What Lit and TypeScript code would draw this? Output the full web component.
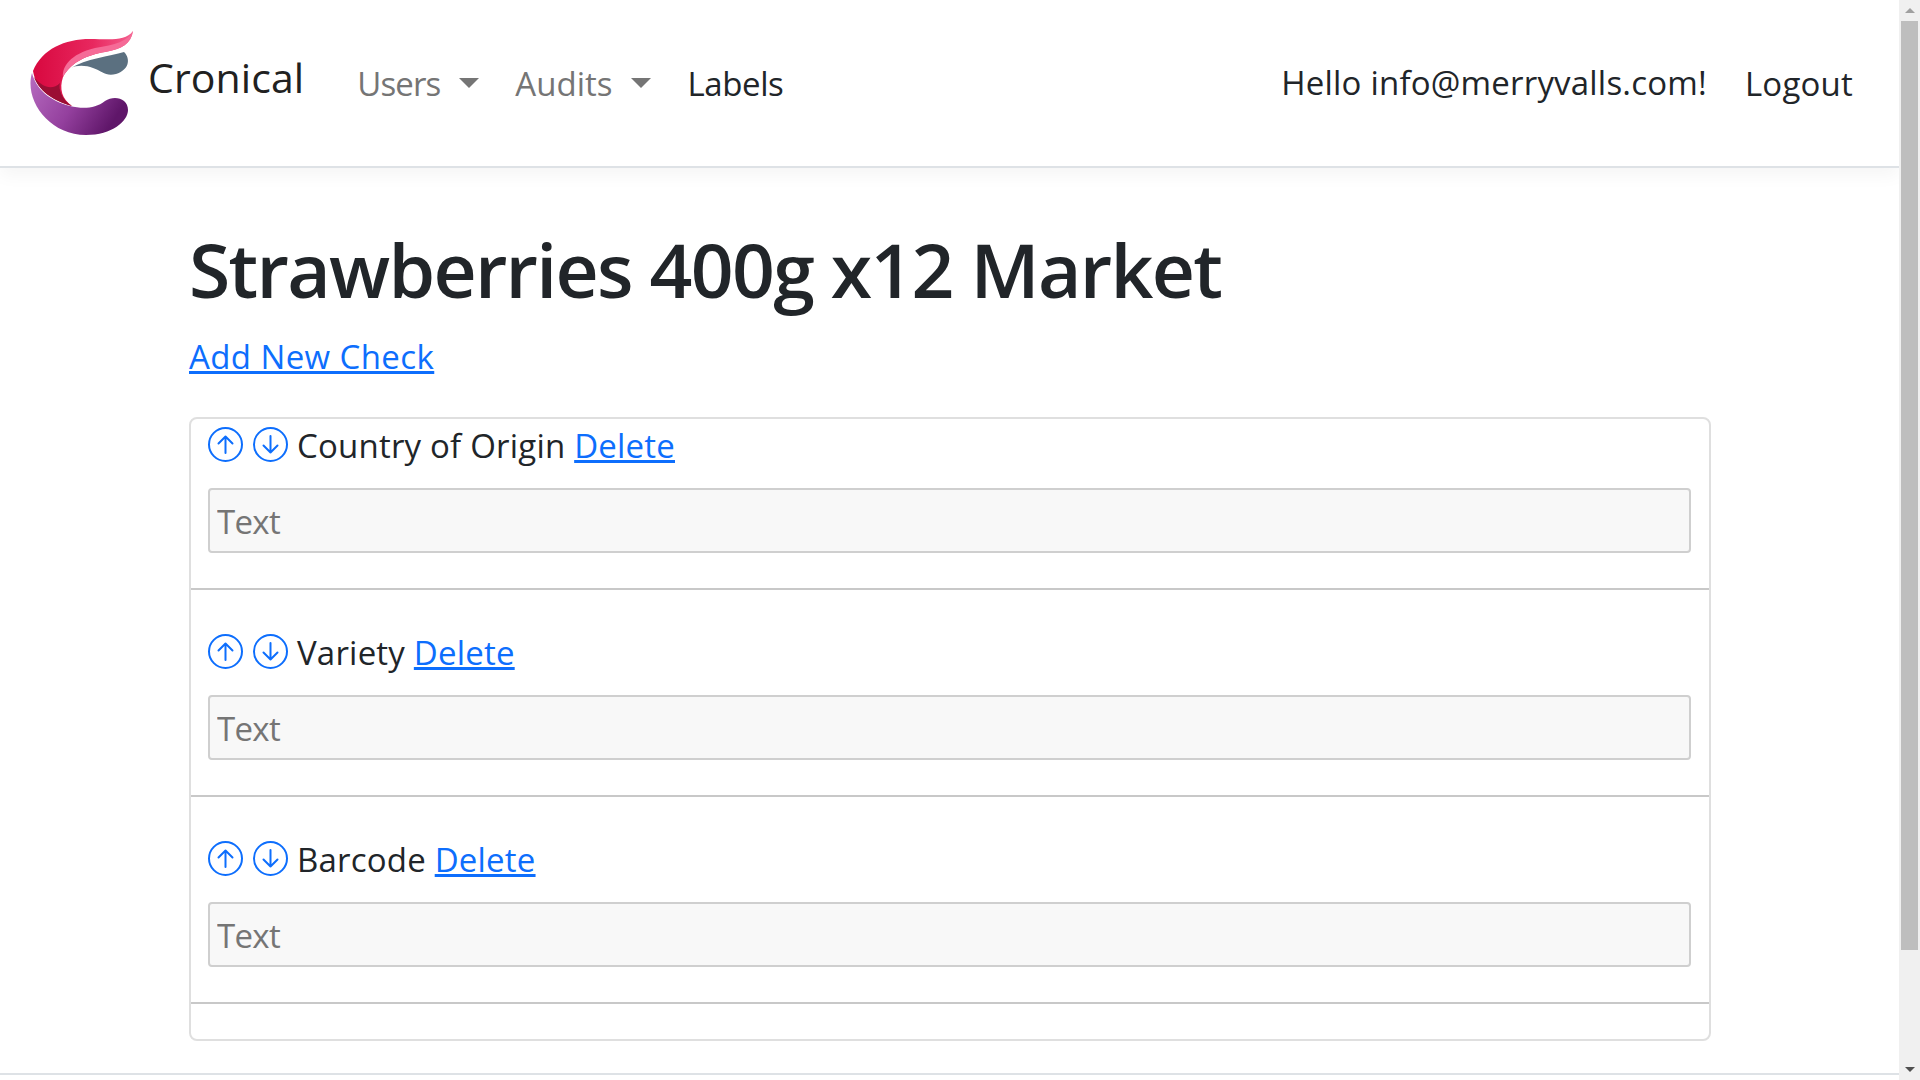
import { LitElement, html, css } from "lit";
import { customElement } from "lit/decorators.js";

const items = ["Country of Origin", "Variety", "Barcode"];

@customElement("app-root")
export class AppRoot extends LitElement {
  static styles = css`
    :host { display: grid; grid-template-columns: 1fr 21px; height: 1080px; overflow: hidden; background: #fff; color: #212529; font-family: "Open Sans", "Noto Sans", sans-serif; font-size: 33px; letter-spacing: .2px; }
    .page { display: flex; flex-direction: column; height: 1080px; min-width: 0; }
    nav { display: flex; align-items: center; height: 166px; flex: none; padding: 0 46px 0 28px; border-bottom: 2px solid #dee2e6; box-shadow: 0 8px 16px rgba(0,0,0,.04); }
    .logo { width: 108px; height: 108px; flex: none; }
    .brand { font-size: 41px; color: #212121; margin: -12px 0 0 12px; letter-spacing: .1px; }
    .links { display: flex; align-items: center; margin-left: 53px; gap: 36px; letter-spacing: -.4px; }
    .link { display: flex; align-items: center; color: #757575; }
    .link.users { letter-spacing: -.9px; }
    .link.audits { letter-spacing: 0; }
    .link.dark { color: #212529; }
    .caret { width: 0; height: 0; margin-left: 19px; margin-top: -1px; border-left: 10px solid transparent; border-right: 10px solid transparent; border-top: 10px solid #757575; }
    .spacer { flex: 1; }
    .hello { margin-right: 38px; margin-top: -2px; }
    main { flex: 1; padding: 0 188px 0 189px; min-height: 0; }
    h1 { margin: 55px 0 0; font-size: 75px; font-weight: 600; line-height: 92px; letter-spacing: -1.7px; }
    .add { display: block; margin-top: 16px; height: 86px; line-height: 52px; width: max-content; letter-spacing: .4px; }
    a { color: #0d6efd; text-decoration: underline; }
    .card { border: 2px solid #dfdfdf; border-radius: 8px; }
    .row { padding: 36px 18px 35px 17px; border-bottom: 2px solid #c8c8c8; }
    .row:first-child { padding-top: 0; }
    .label { display: flex; align-items: center; height: 52px; gap: 9px; margin-bottom: 17px; white-space: pre; }
    .label svg { width: 35px; height: 35px; flex: none; margin-top: -2px; }
    .label svg + svg { margin-left: 1px; }
    input { display: block; box-sizing: border-box; width: 100%; height: 65px; padding: 2px 7px 0; background: #f8f8f8; border: 2px solid #cfcfcf; border-radius: 4px; font: inherit; letter-spacing: -.7px; outline: none; }
    input::placeholder { color: #757575; opacity: 1; }
    .tail { height: 35px; }
    footer { height: 0; flex: none; margin-bottom: 5px; border-bottom: 2px solid #dee2e6; }
    .bar { display: flex; flex-direction: column; align-items: center; background: #f0f0f0; height: 1080px; }
    .arrow { flex: none; height: 21px; display: flex; align-items: center; justify-content: center; }
    .thumb { flex: none; width: 17px; height: 929px; background: #bebebe; }
    .track { flex: 1; }
    .up { width: 0; height: 0; border-left: 5px solid transparent; border-right: 5px solid transparent; border-bottom: 5px solid #a0a0a0; }
    .down { width: 0; height: 0; border-left: 5px solid transparent; border-right: 5px solid transparent; border-top: 5px solid #505050; }
  `;

  private logo() {
    return html`<svg class="logo" viewBox="28 30 108 108" aria-hidden="true">
      <defs>
        <linearGradient id="r" x1="0" y1="0" x2="1" y2="0"><stop offset="0" stop-color="#d8083f"/><stop offset=".6" stop-color="#e8285f"/><stop offset="1" stop-color="#f4608f"/></linearGradient>
        <linearGradient id="p" x1="0" y1="0" x2="1" y2=".4"><stop offset="0" stop-color="#b76cc0"/><stop offset=".55" stop-color="#94409e"/><stop offset="1" stop-color="#5f1669"/></linearGradient>
      </defs>
      <path d="M71 69C85 60 110 57 124 53C131 60 129 71 116 75C106 78 102 72 93 69C86 66 76 66 71 69Z" fill="#5b7080"/>
      <path d="M133 32C131 45 122 50 105 53C88 56 72 62 63 78C59 90 62 100 72 107C50 100 36 90 33 72C42 50 65 40 90 40C108 40 125 43 133 32Z" fill="url(#r)"/>
      <path d="M133 32C131 45 122 50 105 53C88 56 72 62 63 78C62 68 70 55 95 49C115 46 128 42 133 32Z" fill="#f56b97"/>
      <path d="M34 78C38 90 52 102 72 107C62 101 58 90 60 84C52 92 42 88 34 78Z" fill="#9b0e34"/>
      <path d="M32 74C24 100 48 136 86 136C112 136 128 122 128 111C128 99 114 96 105 102C95 110 82 110 70 107C50 102 36 90 32 74Z" fill="url(#p)"/>
    </svg>`;
  }

  private circle(up: boolean) {
    const d = up ? "M17.5 26V9.5M10.5 16.5l7-7 7 7" : "M17.5 9v16.5M10.5 18.5l7 7 7-7";
    return html`<svg viewBox="0 0 35 35" fill="none" stroke="#0d6efd" stroke-width="2" stroke-linecap="round" stroke-linejoin="round" aria-hidden="true">
      <circle cx="17.5" cy="17.5" r="16.5"/><path d=${d}/></svg>`;
  }

  render() {
    return html`
      <div class="page">
        <nav>
          ${this.logo()}
          <div class="brand">Cronical</div>
          <div class="links">
            <div class="link users">Users<i class="caret"></i></div>
            <div class="link audits">Audits<i class="caret"></i></div>
            <div class="link dark">Labels</div>
          </div>
          <div class="spacer"></div>
          <div class="hello">Hello info@merryvalls.com!</div>
          <div class="logout">Logout</div>
        </nav>
        <main>
          <h1>Strawberries 400g x12 Market</h1>
          <a class="add" href="#">Add New Check</a>
          <div class="card">
            ${items.map((t) => html`<div class="row">
              <div class="label">${this.circle(true)}${this.circle(false)}<span>${t} <a href="#">Delete</a></span></div>
              <input placeholder="Text" />
            </div>`)}
            <div class="tail"></div>
          </div>
        </main>
        <footer></footer>
      </div>
      <div class="bar">
        <div class="arrow"><i class="up"></i></div>
        <div class="thumb"></div>
        <div class="track"></div>
        <div class="arrow"><i class="down"></i></div>
      </div>
    `;
  }
}
